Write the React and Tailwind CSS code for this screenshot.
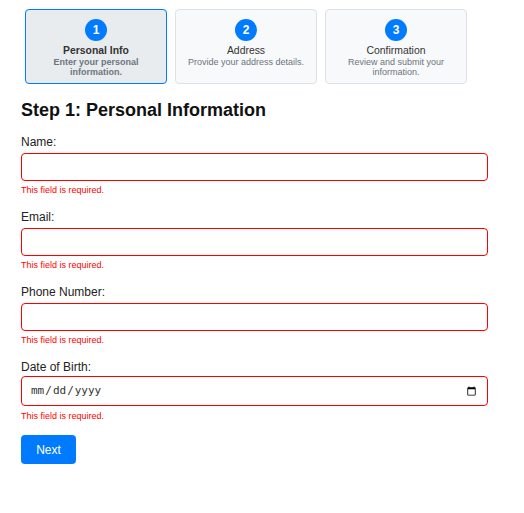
import { useState } from 'react';

const steps = [
  { n: 1, title: 'Personal Info', desc: 'Enter your personal information.' },
  { n: 2, title: 'Address', desc: 'Provide your address details.' },
  { n: 3, title: 'Confirmation', desc: 'Review and submit your information.' },
];

const fields = [
  { id: 'name', label: 'Name:', type: 'text' },
  { id: 'email', label: 'Email:', type: 'email' },
  { id: 'phone', label: 'Phone Number:', type: 'tel' },
  { id: 'dob', label: 'Date of Birth:', type: 'date' },
];

function Step({ step, active }) {
  return (
    <div
      className={
        'w-[142px] mx-1 flex flex-col items-center rounded border px-2 pt-[9px] pb-[6px] text-center ' +
        (active ? 'bg-[#e9ecef] border-[#007bff]' : 'bg-[#f8f9fa] border-[#dee2e6]')
      }
    >
      {/* Step number */}
      <div className="w-[22px] h-[22px] rounded-full bg-[#007bff] text-white text-[12px] font-bold flex items-center justify-center">
        {step.n}
      </div>
      <div
        className={
          'mt-1 text-[10.4px] leading-[12px] text-[#333] ' + (active ? 'font-bold' : '')
        }
      >
        {step.title}
      </div>
      <div
        className={
          'text-[9px] leading-[10px] text-[#6c757d] ' + (active ? 'font-bold' : '')
        }
      >
        {step.desc}
      </div>
    </div>
  );
}

export default function App() {
  const [values, setValues] = useState({});

  return (
    <div className="bg-white min-h-[513px] pt-[9px] text-[#111]" style={{ fontFamily: '"Liberation Sans", Arial, sans-serif' }}>
      <div className="ml-[21px] w-[467px]">
        {/* Stepper */}
        <div className="flex">
          {steps.map((s) => (
            <Step key={s.n} step={s} active={s.n === 1} />
          ))}
        </div>

        <h2 className="mt-[15px] text-[18px] leading-[22px] font-bold text-[#111]">
          Step 1: Personal Information
        </h2>

        <form className="mt-[14px]" onSubmit={(e) => e.preventDefault()}>
          {fields.map((f) => {
            const isDate = f.type === 'date';
            return (
              <div key={f.id} className={isDate ? 'mb-[14px]' : 'mb-[15px]'}>
                <label
                  htmlFor={f.id}
                  className={'block text-[12px] leading-[14px] text-[#222] ' + (isDate ? 'mb-[2px]' : 'mb-1')}
                >
                  {f.label}
                </label>
                <input
                  id={f.id}
                  type={f.type}
                  value={values[f.id] || ''}
                  onChange={(e) => setValues({ ...values, [f.id]: e.target.value })}
                  className={
                    'block w-full rounded border border-[#ff0000] px-2 outline-none bg-white ' +
                    (isDate
                      ? 'h-[30px] text-[11px] text-[#333] font-["DejaVu_Sans_Mono",monospace]'
                      : 'h-[28px] text-[12px]')
                  }
                />
                <div
                  className={
                    'text-[9px] leading-[10px] text-[#ff0000] ' + (isDate ? 'mt-[5px]' : 'mt-[4px]')
                  }
                >
                  This field is required.
                </div>
              </div>
            );
          })}

          <button
            type="submit"
            className="w-[55px] h-[29px] rounded bg-[#007bff] text-white text-[12px]"
          >
            Next
          </button>
        </form>
      </div>
    </div>
  );
}
